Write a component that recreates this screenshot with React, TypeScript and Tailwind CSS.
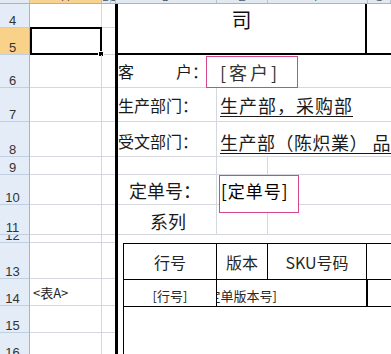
type Row = { n: number; h: string };

// sheet row heights read off the screenshot
const rows: Row[] = [
  { n: 4, h: 'h-[24px]' },
  { n: 5, h: 'h-[27px]' },
  { n: 6, h: 'h-[33px]' },
  { n: 7, h: 'h-[34px]' },
  { n: 8, h: 'h-[35px]' },
  { n: 9, h: 'h-[18px]' },
  { n: 10, h: 'h-[30px]' },
  { n: 11, h: 'h-[30px]' },
  { n: 12, h: 'h-[8px]' },
  { n: 13, h: 'h-[36px]' },
  { n: 14, h: 'h-[27px]' },
  { n: 15, h: 'h-[27px]' },
  { n: 16, h: 'h-[27px]' },
];

const cols = [
  { l: '', w: 'w-[30px]', sel: false },
  { l: 'A', w: 'w-[72px]', sel: true },
  { l: 'B', w: 'w-[9px]', sel: false },
  { l: 'C', w: 'w-[5px]', sel: false },
  { l: 'D', w: 'w-[101px]', sel: false },
  { l: 'E', w: 'w-[51px]', sel: false },
  { l: 'F', w: 'w-[100px]', sel: false },
  { l: 'G', w: 'flex-1', sel: false },
];

const ColumnHeader = () => (
  <div className="h-[4px] shrink-0 flex border-b border-[#9eb6ce]">
    {cols.map((c) => (
      <div
        key={c.l || 'corner'}
        className={`${c.w} shrink-0 h-full border-r border-[#b4c2d3] flex items-end justify-center overflow-hidden ${c.sel ? 'bg-[#f8d38f]' : 'bg-[#e3e9f1]'}`}
      >
        <span className="text-[11px] leading-[11px] font-['Liberation_Sans',sans-serif] text-[#4a5666]">{c.l}</span>
      </div>
    ))}
  </div>
);

const SheetRow = ({ row }: { row: Row }) => {
  const sel = row.n === 5;
  return (
    <div className={`${row.h} shrink-0 flex`}>
      <div
        className={`w-[30px] shrink-0 border-r border-b border-r-[#9eb6ce] border-b-[#c0cfe0] flex items-end justify-center pr-[4px] overflow-hidden text-[13px] leading-[13px] text-[#333] font-['Liberation_Sans',sans-serif] ${sel ? 'bg-[#f9d28a]' : 'bg-[#e4ecf7]'}`}
      >
        {row.n}
      </div>
      <div className="w-[72px] shrink-0 border-r border-b border-[#d4d8de] relative flex items-center">
        {row.n === 14 && <span className="pl-[3px] text-[13px] leading-[13px] text-[#222]">&lt;表A&gt;</span>}
        {sel && (
          <>
            <div className="absolute left-0 -right-[1px] -top-[1px] -bottom-[1px] border-2 border-black" />
            <div className="absolute -right-[3px] -bottom-[3px] w-[6px] h-[6px] bg-black border border-white" />
          </>
        )}
      </div>
      <div className="w-[13px] shrink-0 border-b border-[#d4d8de]" />
    </div>
  );
};

const FormArea = () => (
  <div className="flex-1 min-w-0 border-l-[3px] border-black flex flex-col">
    {/* title, rows 4-5 */}
    <div className="h-[51px] shrink-0 flex border-b-2 border-black">
      <div className="w-[249px] shrink-0 border-r-2 border-black flex justify-center pt-[6px]">
        <span className="text-[20px] leading-[20px] text-[#111]">司</span>
      </div>
      <div className="flex-1" />
    </div>

    {/* row 6 */}
    <div className="h-[33px] shrink-0 border-b border-[#d4d8de] flex items-center relative">
      <div className="w-[90px] flex justify-between text-[16px] leading-[16px]">
        <span>客</span>
        <span>户：</span>
      </div>
      <div className="absolute left-[88px] top-[1px] w-[92px] h-[32px] border border-[#d4478f] bg-white flex items-center pl-[13px] text-[18px] leading-[18px] tracking-[3px] text-[#333]">
        [客户]
      </div>
    </div>

    {/* row 7 */}
    <div className="h-[34px] shrink-0 border-b border-[#d4d8de] flex">
      <div className="w-[99px] shrink-0 border-r border-[#d4d8de] flex items-center text-[16px] leading-[16px]">生产部门：</div>
      <div className="flex items-center pl-[3px] whitespace-nowrap">
        <span className="text-[18px] leading-[18px] tracking-[1px] underline underline-offset-[3px] decoration-1">生产部，采购部</span>
      </div>
    </div>

    {/* row 8 */}
    <div className="h-[35px] shrink-0 border-b border-[#d4d8de] flex">
      <div className="w-[99px] shrink-0 border-r border-[#d4d8de] flex items-start pt-[11px] text-[16px] leading-[16px]">受文部门：</div>
      <div className="flex items-start pt-[11px] pl-[3px] whitespace-pre">
        <span className="text-[18px] leading-[18px] tracking-[0.5px] underline underline-offset-[3px] decoration-1">生产部（陈炽業） 品</span>
      </div>
    </div>

    {/* row 9 */}
    <div className="h-[18px] shrink-0 border-b border-[#d4d8de] flex">
      <div className="w-[99px] shrink-0 border-r border-[#d4d8de]" />
      <div className="w-[51px] shrink-0 border-r border-[#d4d8de]" />
    </div>

    {/* row 10 */}
    <div className="h-[30px] shrink-0 border-b border-[#d4d8de] flex relative">
      <div className="w-[99px] shrink-0 border-r border-[#d4d8de] flex items-center pl-[11px] pt-[1px] text-[18px] leading-[18px]">定单号：</div>
      <div className="w-[51px] shrink-0 border-r border-[#d4d8de]" />
      <div className="absolute left-[101px] top-0 w-[80px] h-[38px] border border-[#d4478f] bg-white flex items-start pt-[6px] pl-[1px] text-[17px] leading-[17px] tracking-[1px] text-black">
        [定单号]
      </div>
    </div>

    {/* row 11 */}
    <div className="h-[30px] shrink-0 border-b border-[#d4d8de] flex">
      <div className="w-[99px] shrink-0 border-r border-[#d4d8de] flex items-center pl-[32px] pt-[2px] text-[18px] leading-[18px]">系列</div>
      <div className="w-[51px] shrink-0 border-r border-[#d4d8de]" />
    </div>

    {/* row 12 */}
    <div className="h-[8px] shrink-0" />

    {/* table */}
    <div className="flex-1 ml-[5px] border-l border-black flex flex-col text-[#262626]">
      <div className="h-[37px] shrink-0 flex border-y border-black text-[16px] leading-[16px]">
        <div className="w-[93px] shrink-0 border-r border-black flex items-center justify-center">行号</div>
        <div className="w-[51px] shrink-0 border-r border-black flex items-center justify-center">版本</div>
        <div className="w-[99px] shrink-0 border-r border-black flex items-center justify-center">SKU号码</div>
        <div className="flex-1" />
      </div>
      <div className="h-[27px] shrink-0 flex border-b border-black text-[13px] leading-[13px]">
        <div className="w-[93px] shrink-0 border-r border-black flex items-center justify-center pt-[4px]">[行号]</div>
        <div className="w-[151px] shrink-0 border-r-2 border-black flex items-center pt-[4px] overflow-hidden whitespace-nowrap">
          <span className="-ml-[14px]">[定单版本号]</span>
        </div>
        <div className="flex-1" />
      </div>
    </div>
  </div>
);

export default function App() {
  return (
    <div className="w-[391px] h-[354px] overflow-hidden bg-white flex flex-col font-['Noto_Sans_CJK_SC',sans-serif] text-[#1a1a1a]">
      <ColumnHeader />
      <div className="flex flex-1 min-h-0">
        <div className="w-[115px] shrink-0 flex flex-col">
          {rows.map((r) => (
            <SheetRow key={r.n} row={r} />
          ))}
        </div>
        <FormArea />
      </div>
    </div>
  );
}
